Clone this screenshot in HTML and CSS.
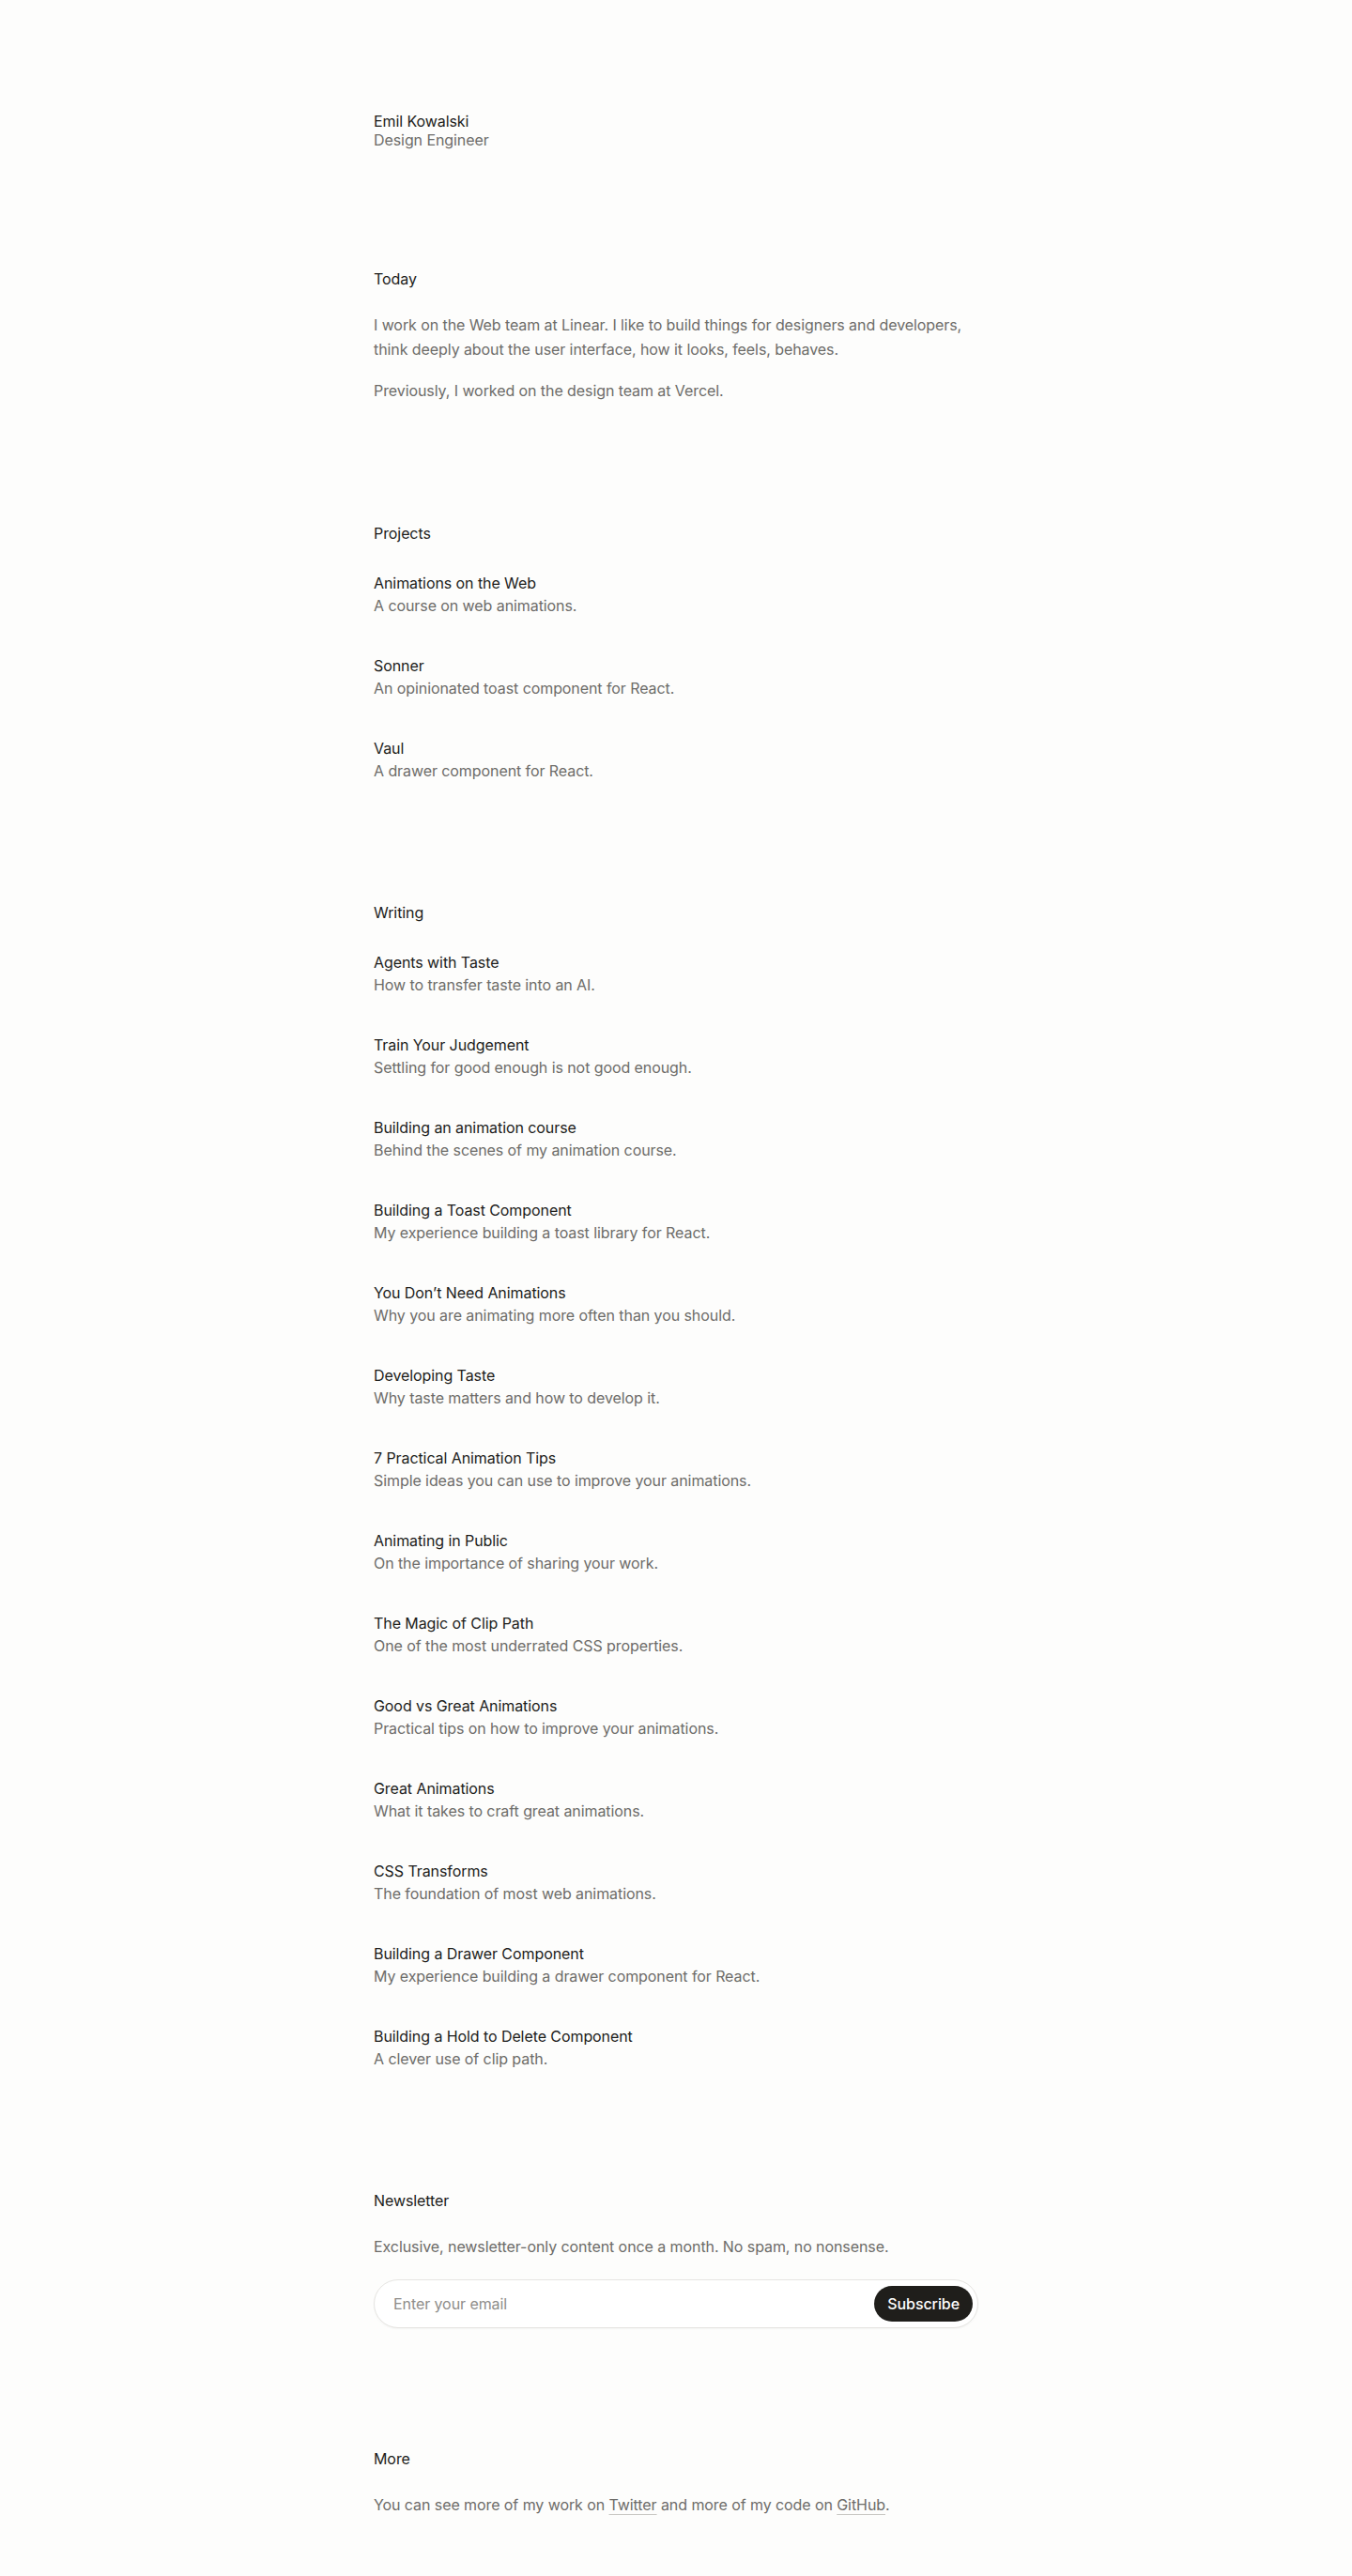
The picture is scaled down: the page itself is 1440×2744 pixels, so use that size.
FILE: index.html
```html
<!DOCTYPE html>
<html lang="en">
<head>
<meta charset="utf-8">
<title>Emil Kowalski</title>
<link rel="stylesheet" href="styles.css">
</head>
<body>
<main class="page">
  <header class="intro">
    <div class="name">Emil Kowalski</div>
    <div class="role">Design Engineer</div>
  </header>

  <section class="section">
    <h2 class="heading">Today</h2>
    <div class="prose">
      <p>I work on the Web team at Linear. I like to build things for designers and developers, think deeply about the user interface, how it looks, feels, behaves.</p>
      <p>Previously, I worked on the design team at Vercel.</p>
    </div>
  </section>

  <section class="section">
    <h2 class="heading">Projects</h2>
    <ul class="list">
      <li class="item"><a class="title" href="#">Animations on the Web</a><span class="desc">A course on web animations.</span></li>
      <li class="item"><a class="title" href="#">Sonner</a><span class="desc">An opinionated toast component for React.</span></li>
      <li class="item"><a class="title" href="#">Vaul</a><span class="desc">A drawer component for React.</span></li>
    </ul>
  </section>

  <section class="section">
    <h2 class="heading">Writing</h2>
    <ul class="list">
      <li class="item"><a class="title" href="#">Agents with Taste</a><span class="desc">How to transfer taste into an AI.</span></li>
      <li class="item"><a class="title" href="#">Train Your Judgement</a><span class="desc">Settling for good enough is not good enough.</span></li>
      <li class="item"><a class="title" href="#">Building an animation course</a><span class="desc">Behind the scenes of my animation course.</span></li>
      <li class="item"><a class="title" href="#">Building a Toast Component</a><span class="desc">My experience building a toast library for React.</span></li>
      <li class="item"><a class="title" href="#">You Don’t Need Animations</a><span class="desc">Why you are animating more often than you should.</span></li>
      <li class="item"><a class="title" href="#">Developing Taste</a><span class="desc">Why taste matters and how to develop it.</span></li>
      <li class="item"><a class="title" href="#">7 Practical Animation Tips</a><span class="desc">Simple ideas you can use to improve your animations.</span></li>
      <li class="item"><a class="title" href="#">Animating in Public</a><span class="desc">On the importance of sharing your work.</span></li>
      <li class="item"><a class="title" href="#">The Magic of Clip Path</a><span class="desc">One of the most underrated CSS properties.</span></li>
      <li class="item"><a class="title" href="#">Good vs Great Animations</a><span class="desc">Practical tips on how to improve your animations.</span></li>
      <li class="item"><a class="title" href="#">Great Animations</a><span class="desc">What it takes to craft great animations.</span></li>
      <li class="item"><a class="title" href="#">CSS Transforms</a><span class="desc">The foundation of most web animations.</span></li>
      <li class="item"><a class="title" href="#">Building a Drawer Component</a><span class="desc">My experience building a drawer component for React.</span></li>
      <li class="item"><a class="title" href="#">Building a Hold to Delete Component</a><span class="desc">A clever use of clip path.</span></li>
    </ul>
  </section>

  <section class="section">
    <h2 class="heading">Newsletter</h2>
    <div class="prose">
      <p>Exclusive, newsletter-only content once a month. No spam, no nonsense.</p>
    </div>
    <form class="subscribe" onsubmit="return false">
      <input class="email" type="email" placeholder="Enter your email">
      <button class="button" type="submit">Subscribe</button>
    </form>
  </section>

  <section class="section">
    <h2 class="heading">More</h2>
    <div class="prose">
      <p>You can see more of my work on <a class="link" href="#">Twitter</a> and more of my code on <a class="link" href="#">GitHub</a>.</p>
    </div>
  </section>
</main>
</body>
</html>
```

FILE: styles.css
```css
* {
  box-sizing: border-box;
}

html, body {
  margin: 0;
  padding: 0;
  background: #fdfdfc;
}

body {
  font-family: Inter, "Noto Sans", "Liberation Sans", sans-serif;
  font-size: 16px;
  letter-spacing: -0.08px;
  color: #1c1c1a;
  -webkit-font-smoothing: antialiased;
}

.page {
  width: 644px;
  margin: 0 auto;
  padding: 119px 0 64px;
}

.intro {
  line-height: 20px;
}

.name {
  color: #1c1c1a;
}

.role {
  color: #6d6c69;
}

.section {
  margin-top: 127px;
}

.intro + .section {
  margin-top: 126px;
}

.heading {
  margin: 0;
  font-size: 16px;
  font-weight: 400;
  line-height: 24px;
  color: #1c1c1a;
}

.prose {
  margin-top: 24px;
  color: #6d6c69;
  line-height: 26px;
}

.prose p {
  margin: 0 0 18px;
}

.prose p:last-child {
  margin-bottom: 0;
}

.list {
  list-style: none;
  margin: 29px 0 0;
  padding: 0;
  display: flex;
  flex-direction: column;
  gap: 40px;
}

.item {
  display: flex;
  flex-direction: column;
  line-height: 24px;
}

.title {
  color: #1c1c1a;
  text-decoration: none;
}

.desc {
  color: #6d6c69;
}

.subscribe {
  margin-top: 22px;
  height: 52px;
  border: 1px solid #e6e5e2;
  border-radius: 999px;
  background: #ffffff;
  display: flex;
  align-items: center;
  padding: 0 5px 0 20px;
  box-shadow: 0 1px 2px rgba(0, 0, 0, 0.04);
}

.email {
  flex: 1;
  border: 0;
  outline: none;
  background: transparent;
  font-family: inherit;
  font-size: 16px;
  letter-spacing: inherit;
  color: #1c1c1a;
  padding: 0;
}

.email::placeholder {
  color: #8e8d8a;
}

.button {
  height: 38px;
  padding: 0 14px;
  border: 0;
  border-radius: 999px;
  background: #1f1e1b;
  color: #ffffff;
  font-family: inherit;
  font-size: 16px;
  font-weight: 500;
  letter-spacing: inherit;
}

.link {
  color: #6d6c69;
  text-decoration: underline;
  text-decoration-color: #c9c8c4;
  text-decoration-thickness: 1px;
  text-underline-offset: 4px;
}
```
